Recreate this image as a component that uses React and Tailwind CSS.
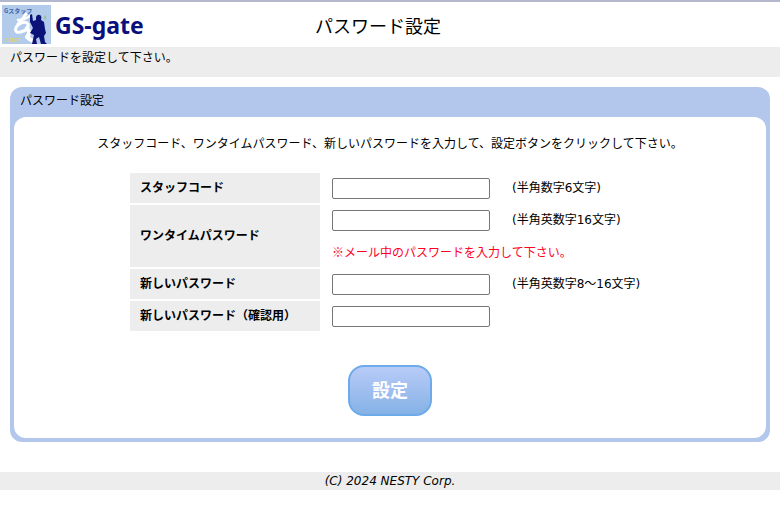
import React, { useState } from 'react';

const App = () => {
  const [form, setForm] = useState({ staff: '', onetime: '', nuevo: '', confirm: '' });

  const bind = (key) => ({
    id: key,
    value: form[key],
    onChange: (e) => setForm((prev) => ({ ...prev, [key]: e.target.value })),
  });

  return (
    <div className="min-h-screen bg-white text-black text-[12px] leading-[18px] font-['DejaVu_Sans','Noto_Sans_CJK_JP',sans-serif]">
      {/* HEADER */}
      <header className="border-t-2 border-[#b4b8cc] h-[47px] grid grid-cols-[1fr_auto_1fr] items-center pr-6">
        <div className="flex items-center gap-1 pl-0.5">
          <Logo />
          <span className="text-[23px] leading-[30px] font-bold text-[#0a0f7c] font-['Noto_Sans',sans-serif]">GS-gate</span>
        </div>
        <h1 className="text-[18px] leading-[30px] pt-1">パスワード設定</h1>
      </header>

      <p className="bg-[#ededed] h-[30px] px-2.5 pt-0.5">パスワードを設定して下さい。</p>

      {/* PANEL */}
      <main className="m-2.5 mb-[30px] bg-[#b3c7ed] rounded-xl px-1 pb-1">
        <h2 className="h-[30px] px-1.5 pt-[5px]">パスワード設定</h2>
        <form className="bg-white rounded-xl pt-[18px] pb-[22px]" onSubmit={(e) => e.preventDefault()}>
          <p className="text-center">
            スタッフコード、ワンタイムパスワード、新しいパスワードを入力して、設定ボタンをクリックして下さい。
          </p>

          <table className="mx-auto mt-[18px] w-[524px] table-fixed border-separate border-spacing-[2px]">
            <tbody>
              <tr className="h-[30px]">
                <Label htmlFor="staff">スタッフコード</Label>
                <Field hint="(半角数字6文字)" {...bind('staff')} />
              </tr>
              <tr className="h-[30px]">
                <Label htmlFor="onetime" rowSpan={2}>ワンタイムパスワード</Label>
                <Field type="password" hint="(半角英数字16文字)" {...bind('onetime')} />
              </tr>
              <tr className="h-[30px]">
                <td className="p-0 pl-2.5 text-[#ff0022] font-['Noto_Sans_CJK_JP',sans-serif]">※メール中のパスワードを入力して下さい。</td>
              </tr>
              <tr className="h-[30px]">
                <Label htmlFor="nuevo">新しいパスワード</Label>
                <Field type="password" hint="(半角英数字8～16文字)" {...bind('nuevo')} />
              </tr>
              <tr className="h-[30px]">
                <Label htmlFor="confirm">新しいパスワード（確認用）</Label>
                <Field type="password" {...bind('confirm')} />
              </tr>
            </tbody>
          </table>

          <button
            type="submit"
            className="block mx-auto mt-8 h-[51px] w-[84px] rounded-2xl border-2 border-[#6caaea] bg-linear-to-b from-[#b8cbf8] to-[#85b2e6] text-[18px] leading-[30px] font-bold text-white"
          >
            設定
          </button>
        </form>
      </main>

      <footer className="bg-[#ededed] text-center">
        <address className="italic">(C) 2024 NESTY Corp.</address>
      </footer>
    </div>
  );
};

const Label = ({ htmlFor, rowSpan, children }) => (
  <th scope="row" rowSpan={rowSpan} className="w-[190px] bg-[#ededed] p-0 pl-2.5 text-left font-bold">
    <label htmlFor={htmlFor}>{children}</label>
  </th>
);

const Field = ({ hint, type = 'text', ...props }) => (
  <td className="p-0 pl-2.5">
    <div className="flex items-center gap-[22px]">
      <input type={type} className="h-[21px] w-[158px] rounded-[2px] border border-[#767676] bg-white px-0.5" {...props} />
      {hint && <span>{hint}</span>}
    </div>
  </td>
);

const Logo = () => (
  <svg width="49" height="39" viewBox="0 0 49 39" role="img" aria-label="Gスタッフ">
    <rect width="49" height="39" fill="#b3cbea" />
    {/* kana dibujado a pincel */}
    <g fill="none" stroke="#fff" strokeLinecap="round" strokeLinejoin="round">
      <path d="M16 15 Q22 15 28 11" strokeWidth="2.5" />
      <path d="M24 9 Q21 14 16 19" strokeWidth="3" />
      <path d="M16 20 Q23 15 26 19 Q27 23 22 26" strokeWidth="3" />
      <path d="M15 21 Q12 25 15 27 Q18 28 21 26" strokeWidth="3" />
      <path d="M25 23 Q29 28 25 32 Q27 34 31 36" strokeWidth="4" />
    </g>
    {/* samurai */}
    <path
      d="M28 10 L30 9 L31 16 L34 15 L34 12 Q35 9 38 10 Q40 11 39 15 L42 17 L43 24 L44 28 L42 31 L43 37 L45 39 H39 L37 32 L34 34 L35 39 H30 L32 30 L28 28 L31 23 L28 17 Z"
      fill="#0b1379"
    />
    <path d="M43 10 l1.5 2 l-1 3 l-2 -2z" fill="#9bc49a" />
    <text x="2" y="8" fontSize="6" fontWeight="bold" fill="#3764ad" className="font-['Noto_Sans_CJK_JP',sans-serif]">Gスタッフ</text>
    <text x="4" y="37" fontSize="5" fontWeight="bold" fontStyle="italic" fill="#e2d25c" className="font-['Noto_Sans',sans-serif]">STAFF</text>
  </svg>
);

export default App;
